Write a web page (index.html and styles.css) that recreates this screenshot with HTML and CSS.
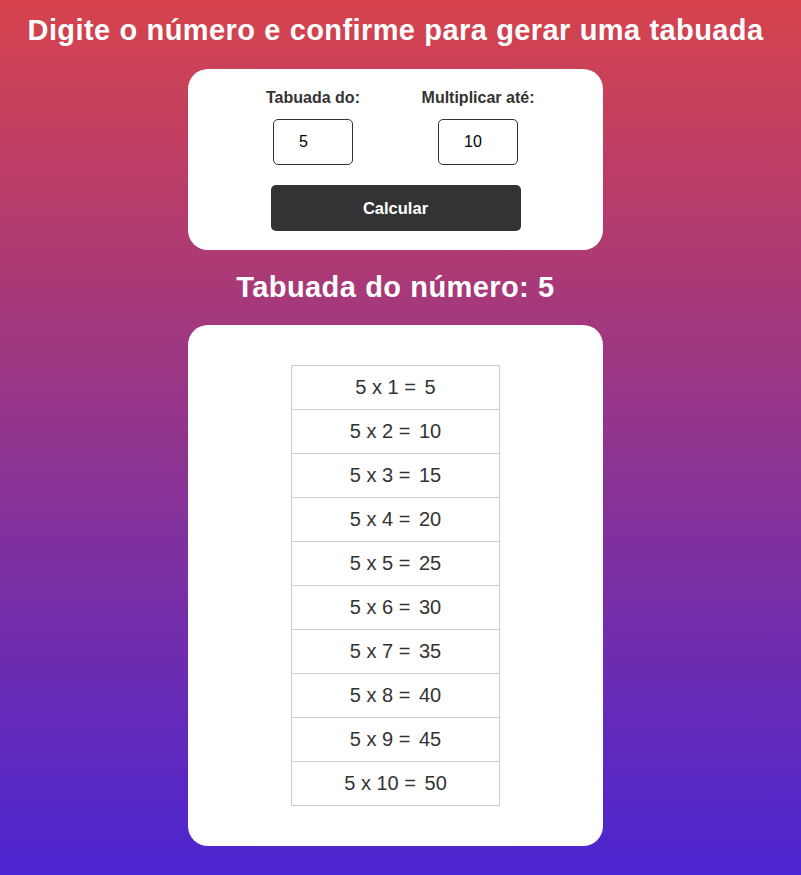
FILE: index.html
```html
<!DOCTYPE html>
<html lang="pt-BR">
<head>
<meta charset="utf-8">
<title>Tabuada</title>
<link rel="stylesheet" href="styles.css">
</head>
<body>
<main class="page">
  <h1 class="title">Digite o número e confirme para gerar uma tabuada</h1>
  <section class="card form-card">
    <div class="fields">
      <div class="field">
        <label class="label" for="num">Tabuada do:</label>
        <input class="input" id="num" type="text" value="5">
      </div>
      <div class="field">
        <label class="label" for="ate">Multiplicar até:</label>
        <input class="input" id="ate" type="text" value="10">
      </div>
    </div>
    <button class="btn" type="button">Calcular</button>
  </section>
  <h2 class="subtitle">Tabuada do número: 5</h2>
  <section class="card result-card">
    <table class="table">
      <tbody>
        <tr><td>5 x 1 = <span class="res">5</span></td></tr>
        <tr><td>5 x 2 = <span class="res">10</span></td></tr>
        <tr><td>5 x 3 = <span class="res">15</span></td></tr>
        <tr><td>5 x 4 = <span class="res">20</span></td></tr>
        <tr><td>5 x 5 = <span class="res">25</span></td></tr>
        <tr><td>5 x 6 = <span class="res">30</span></td></tr>
        <tr><td>5 x 7 = <span class="res">35</span></td></tr>
        <tr><td>5 x 8 = <span class="res">40</span></td></tr>
        <tr><td>5 x 9 = <span class="res">45</span></td></tr>
        <tr><td>5 x 10 = <span class="res">50</span></td></tr>
      </tbody>
    </table>
  </section>
</main>
</body>
</html>
```

FILE: styles.css
```css
* { box-sizing: border-box; }
html, body { height: 100%; }
body {
  margin: 0;
  font-family: "Liberation Sans", Arial, sans-serif;
  background: linear-gradient(to bottom, #d6434c 0%, #4b25d1 100%);
  background-attachment: fixed;
  color: #333;
}
.page {
  display: flex;
  flex-direction: column;
  align-items: center;
  padding: 0 10px 30px 0;
}
.title {
  margin: 14px 0 23px;
  font-size: 29px;
  line-height: 32px;
  letter-spacing: 0.4px;
  word-spacing: 0.5px;
  font-weight: bold;
  color: #fff;
  text-align: center;
  white-space: nowrap;
}
.card {
  width: 415px;
  background: #fff;
  border-radius: 20px;
}
.form-card {
  padding: 20px 0 19px;
  display: flex;
  flex-direction: column;
  align-items: center;
}
.fields {
  display: flex;
  justify-content: center;
  gap: 45px;
}
.field {
  width: 120px;
  display: flex;
  flex-direction: column;
  align-items: center;
}
.label {
  font-size: 16px;
  line-height: 18px;
  font-weight: bold;
  color: #333;
  white-space: nowrap;
}
.input {
  margin-top: 12px;
  width: 80px;
  height: 46px;
  border: 1px solid #333;
  border-radius: 5px;
  padding: 0 0 0 25px;
  font-family: "Liberation Sans", Arial, sans-serif;
  font-size: 16px;
  color: #000;
  background: #fff;
}
.btn {
  margin-top: 20px;
  width: 250px;
  height: 46px;
  border: 0;
  border-radius: 5px;
  background: #333;
  color: #fff;
  font-family: "Liberation Sans", Arial, sans-serif;
  font-size: 16.5px;
  font-weight: bold;
}
.subtitle {
  margin: 20px 0 20px;
  font-size: 29px;
  line-height: 35px;
  letter-spacing: 0.4px;
  word-spacing: 0.5px;
  font-weight: bold;
  color: #fff;
}
.result-card {
  padding: 40px 0;
  display: flex;
  justify-content: center;
}
.table {
  width: 209px;
  border-collapse: collapse;
}
.table td {
  height: 44px;
  padding: 0;
  border: 1px solid #ccc;
  text-align: center;
  font-size: 20px;
  color: #333;
}
.res {
  margin-left: 3px;
}
```
